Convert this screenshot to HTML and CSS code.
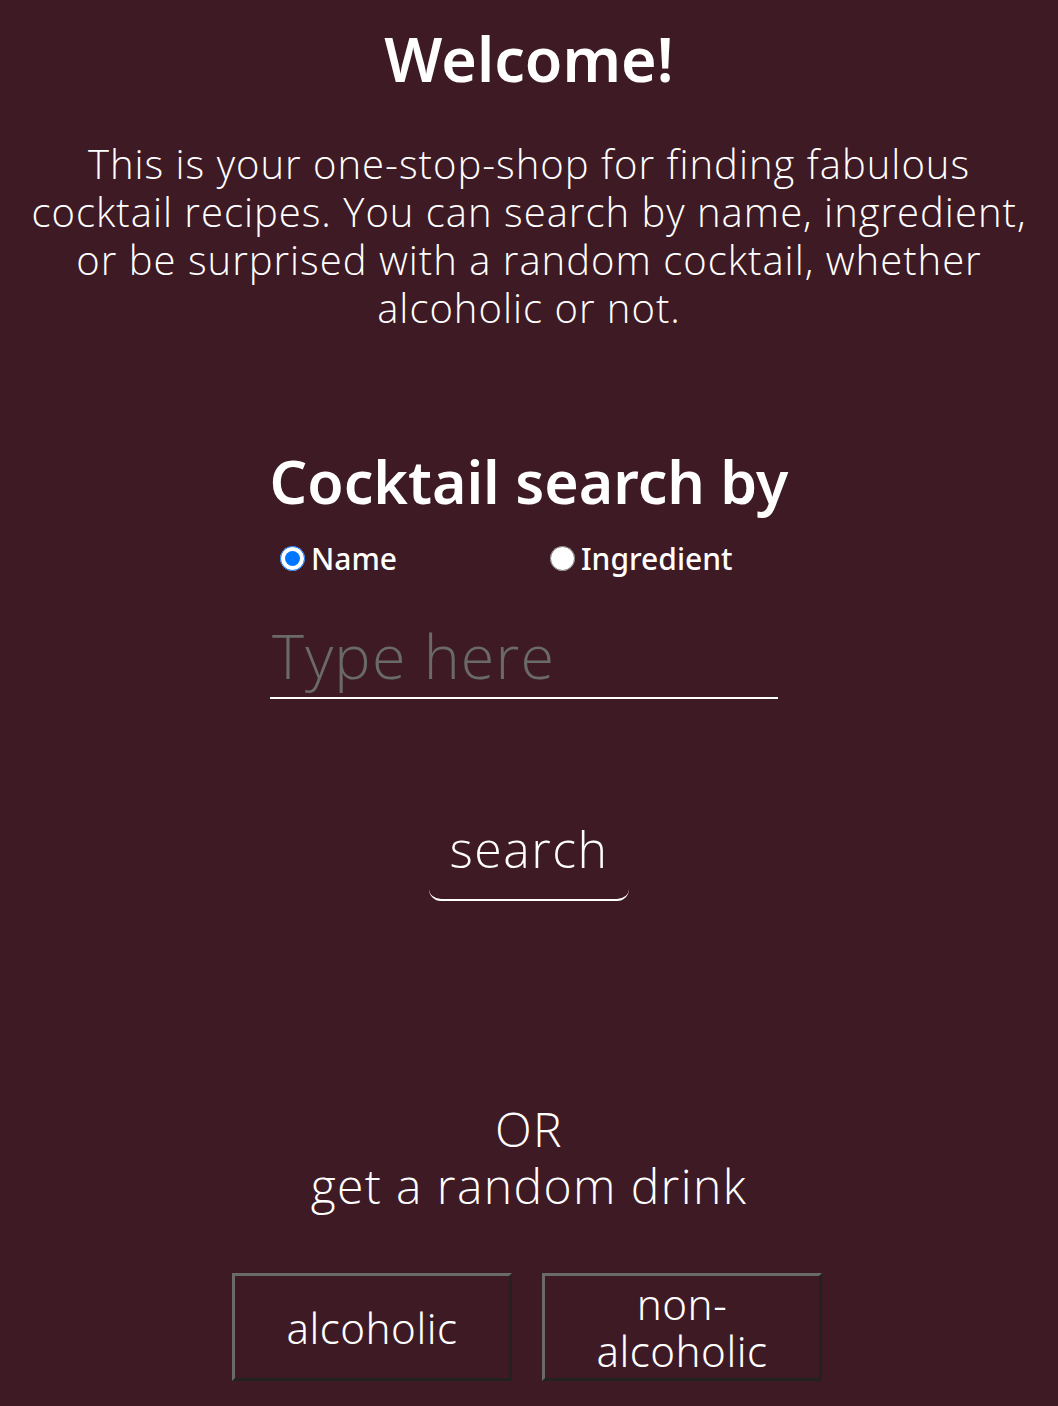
FILE: index.html
```html
<!DOCTYPE html>
<html lang="en">
<head>
<meta charset="utf-8">
<title>Cocktails</title>
<link rel="stylesheet" href="styles.css">
</head>
<body>
<main class="page">
  <h1 class="title">Welcome!</h1>
  <p class="intro">This is your one-stop-shop for finding fabulous cocktail recipes. You can search by name, ingredient, or be surprised with a random cocktail, whether alcoholic or not.</p>

  <section class="search">
    <h2 class="search-title">Cocktail search by</h2>
    <div class="options">
      <label class="option"><input type="radio" name="by" checked><span>Name</span></label>
      <label class="option"><input type="radio" name="by"><span>Ingredient</span></label>
    </div>
    <input class="query" type="text" placeholder="Type here">
    <button class="search-btn" type="button">search</button>
  </section>

  <section class="random">
    <p class="or">OR<br>get a random drink</p>
    <div class="random-btns">
      <button class="rand-btn" type="button">alcoholic</button>
      <button class="rand-btn" type="button">non-<br>alcoholic</button>
    </div>
  </section>
</main>
</body>
</html>
```
FILE: styles.css
```css
html, body {
  margin: 0;
  padding: 0;
  background: #3e1a24;
  color: #ffffff;
}

.page {
  display: flex;
  flex-direction: column;
  align-items: center;
  text-align: center;
  padding: 0 24px;
}

.title {
  font-family: "Noto Sans", sans-serif;
  font-weight: 600;
  font-size: 61px;
  line-height: 1;
  margin: 28px 0 0;
}

.intro {
  font-family: "Open Sans", sans-serif;
  font-weight: 300;
  font-size: 40px;
  letter-spacing: 1px;
  line-height: 48px;
  margin: 51px 0 0;
}

.search {
  display: flex;
  flex-direction: column;
  align-items: center;
  margin-top: 120px;
}

.search-title {
  font-family: "Noto Sans", sans-serif;
  font-weight: 600;
  font-size: 59px;
  line-height: 1;
  margin: 0;
}

.options {
  display: grid;
  grid-template-columns: 270px 1fr;
  width: 508px;
  margin: 27px 10px 0 0;
  text-align: left;
}

.option {
  display: flex;
  align-items: center;
  padding-left: 10px;
  font-family: "Noto Sans", sans-serif;
  font-weight: 500;
  font-size: 30px;
}

.option input {
  width: 25px;
  height: 25px;
  margin: 0 6px 0 0;
}

.query {
  width: 508px;
  box-sizing: border-box;
  margin: 42px 10px 0 0;
  background: transparent;
  border: none;
  border-bottom: 2px solid #ffffff;
  color: #ffffff;
  font-family: "Open Sans", sans-serif;
  font-weight: 300;
  font-size: 61px;
  letter-spacing: 1.2px;
  line-height: 70px;
  padding: 0 0 6px 2px;
  outline: none;
}

.query::placeholder {
  color: #6a6a6a;
}

.search-btn {
  margin-top: 120px;
  width: 200px;
  background: transparent;
  border: none;
  border-bottom: 2px solid #ffffff;
  border-radius: 0 0 12px 12px;
  color: #ffffff;
  font-family: "Open Sans", sans-serif;
  font-weight: 300;
  font-size: 50px;
  letter-spacing: 1.5px;
  line-height: 1.2;
  padding: 0 0 20px;
}

.random {
  display: flex;
  flex-direction: column;
  align-items: center;
  margin-top: 199px;
}

.or {
  font-family: "Open Sans", sans-serif;
  font-weight: 300;
  font-size: 48px;
  letter-spacing: 1.4px;
  line-height: 57px;
  margin: 0;
}

.random-btns {
  display: flex;
  gap: 30px;
  margin: 59px 4px 0 0;
}

.rand-btn {
  width: 280px;
  height: 108px;
  background: #3e1a24;
  border: 3px solid;
  border-color: #6a6a6a #222222 #222222 #6a6a6a;
  color: #ffffff;
  font-family: "Noto Sans", sans-serif;
  font-weight: 300;
  font-size: 42px;
  letter-spacing: 0.5px;
  line-height: 47px;
  padding: 0;
}
```
